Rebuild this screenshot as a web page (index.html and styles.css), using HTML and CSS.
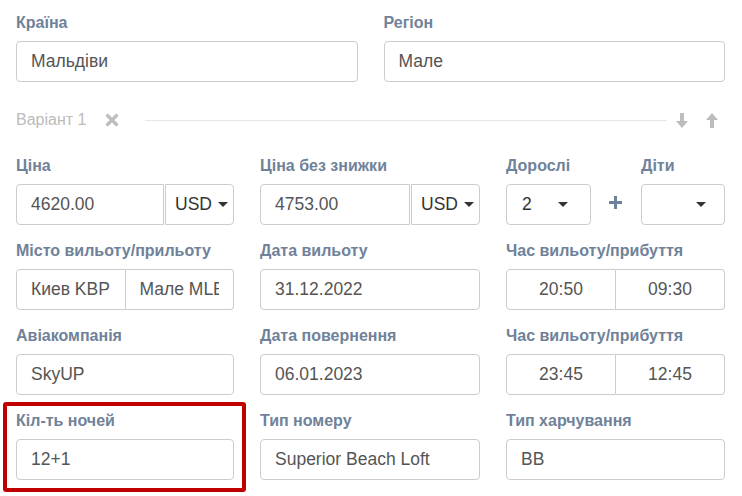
FILE: index.html
```html
<!DOCTYPE html>
<html lang="uk">
<head>
  <meta charset="UTF-8" />
  <title>Варіант туру</title>
  <link rel="stylesheet" href="styles.css">
</head>
<body>
  <div class="form">
    <div class="row two">
      <div class="field">
        <label>Країна</label>
        <input class="control" type="text" value="Мальдіви" readonly>
      </div>
      <div class="field">
        <label>Регіон</label>
        <input class="control" type="text" value="Мале" readonly>
      </div>
    </div>

    <div class="variant">
      <span class="variant-title">Варіант 1</span>
      <svg class="remove" width="12" height="12" viewBox="0 0 12 12"><path d="M1.5 1.5l9 9M10.5 1.5l-9 9" stroke="#bdbdbd" stroke-width="3.2" stroke-linecap="round"/></svg>
      <span class="variant-line"></span>
      <svg class="arrow" width="12" height="15" viewBox="0 0 12 15"><path d="M4 0h4v8h4l-6 7-6-7h4z" fill="#bdbdbd"/></svg>
      <svg class="arrow" width="12" height="15" viewBox="0 0 12 15"><path d="M4 15h4v-8h4l-6-7-6 7h4z" fill="#bdbdbd"/></svg>
    </div>

    <div class="row three">
      <div class="field">
        <label>Ціна</label>
        <div class="group">
          <input class="control joined-left" type="text" value="4620.00" readonly>
          <div class="addon">USD <span class="caret"></span></div>
        </div>
      </div>
      <div class="field">
        <label>Ціна без знижки</label>
        <div class="group">
          <input class="control joined-left" type="text" value="4753.00" readonly>
          <div class="addon">USD <span class="caret"></span></div>
        </div>
      </div>
      <div class="field people">
        <div class="sub adults">
          <label>Дорослі</label>
          <div class="select">2 <span class="caret"></span></div>
        </div>
        <div class="plus">
          <svg width="13" height="13" viewBox="0 0 13 13"><path d="M5 0h3v5h5v3h-5v5h-3v-5h-5v-3h5z" fill="#6f8299"/></svg>
        </div>
        <div class="sub kids">
          <label>Діти</label>
          <div class="select"><span class="caret"></span></div>
        </div>
      </div>
    </div>

    <div class="row three">
      <div class="field">
        <label>Місто вильоту/прильоту</label>
        <div class="group split">
          <input class="control joined-left" type="text" value="Киев KBP" readonly>
          <input class="control joined-right" type="text" value="Мале MLE" readonly>
        </div>
      </div>
      <div class="field">
        <label>Дата вильоту</label>
        <input class="control" type="text" value="31.12.2022" readonly>
      </div>
      <div class="field">
        <label>Час вильоту/прибуття</label>
        <div class="group split">
          <input class="control joined-left center" type="text" value="20:50" readonly>
          <input class="control joined-right center" type="text" value="09:30" readonly>
        </div>
      </div>
    </div>

    <div class="row three">
      <div class="field">
        <label>Авіакомпанія</label>
        <input class="control" type="text" value="SkyUP" readonly>
      </div>
      <div class="field">
        <label>Дата повернення</label>
        <input class="control" type="text" value="06.01.2023" readonly>
      </div>
      <div class="field">
        <label>Час вильоту/прибуття</label>
        <div class="group split">
          <input class="control joined-left center" type="text" value="23:45" readonly>
          <input class="control joined-right center" type="text" value="12:45" readonly>
        </div>
      </div>
    </div>

    <div class="row three">
      <div class="field highlight">
        <label>Кіл-ть ночей</label>
        <input class="control" type="text" value="12+1" readonly>
      </div>
      <div class="field">
        <label>Тип номеру</label>
        <input class="control" type="text" value="Superior Beach Loft" readonly>
      </div>
      <div class="field">
        <label>Тип харчування</label>
        <input class="control" type="text" value="BB" readonly>
      </div>
    </div>
  </div>
</body>
</html>
```

FILE: styles.css
```css
body { margin: 0; background: #fff; font-family: "Liberation Sans", Arial, sans-serif; }
.form { padding: 12px 17px 0 16px; }
.row { display: grid; gap: 26px; margin-bottom: 15px; }
.row.two { grid-template-columns: 1fr 1fr; margin-bottom: 0; }
.row.three { grid-template-columns: 218px 220px 219px; }
.field { display: flex; flex-direction: column; min-width: 0; position: relative; }
label { display: block; height: 22px; line-height: 22px; margin-bottom: 7px; font-family: "Liberation Sans", Arial, sans-serif; font-size: 16px; font-weight: bold; color: #6f8299; white-space: nowrap; }
.control { box-sizing: border-box; width: 100%; height: 41px; margin: 0; padding: 0 14px; border: 1px solid #ccc; border-radius: 4px; font-family: "Liberation Sans", Arial, sans-serif; font-size: 17.5px; color: #555; background: #fff; outline: none; min-width: 0; }
.control.center { text-align: center; padding: 0 4px; }
.group { display: flex; }
.group .joined-left { border-top-right-radius: 0; border-bottom-right-radius: 0; }
.group .joined-right { border-top-left-radius: 0; border-bottom-left-radius: 0; border-left: none; }
.group.split .control { flex: 1 1 0; }
.addon { box-sizing: border-box; flex: 0 0 69px; height: 41px; margin-left: 1px; padding-left: 9px; border: 1px solid #ccc; border-radius: 0 4px 4px 0; display: flex; align-items: center; font-size: 17.5px; color: #333; }
.caret { display: inline-block; width: 0; height: 0; border-left: 5px solid transparent; border-right: 5px solid transparent; border-top: 5px solid #333; margin-left: 6px; }
.people { flex-direction: row; }
.sub { display: flex; flex-direction: column; }
.adults { width: 85px; }
.kids { width: 84px; }
.select { box-sizing: border-box; height: 41px; border: 1px solid #ccc; border-radius: 4px; display: flex; align-items: center; padding: 0 14px 0 15px; font-size: 17.5px; color: #333; justify-content: space-between; }
.kids .select { justify-content: flex-end; padding-right: 18px; }
.adults .select .caret { margin-right: 8px; }
.plus { width: 50px; display: flex; justify-content: center; padding-top: 41px; box-sizing: border-box; padding-right: 1px; }
.variant { display: flex; align-items: center; height: 20px; margin: 28px 0 25px; }
.variant-title { font-size: 16px; color: #bbb; }
.remove { margin-left: 20px; }
.variant-line { flex: 1; height: 1px; background: #e6e6e6; margin: 0 9px 0 27px; }
.arrow { margin-right: 18px; }
.arrow:last-child { margin-right: 7px; }
.highlight::after { content: ""; position: absolute; top: -8px; left: -13px; right: -12px; bottom: -12px; border: 4px solid #c00000; border-radius: 3px; pointer-events: none; }
```
